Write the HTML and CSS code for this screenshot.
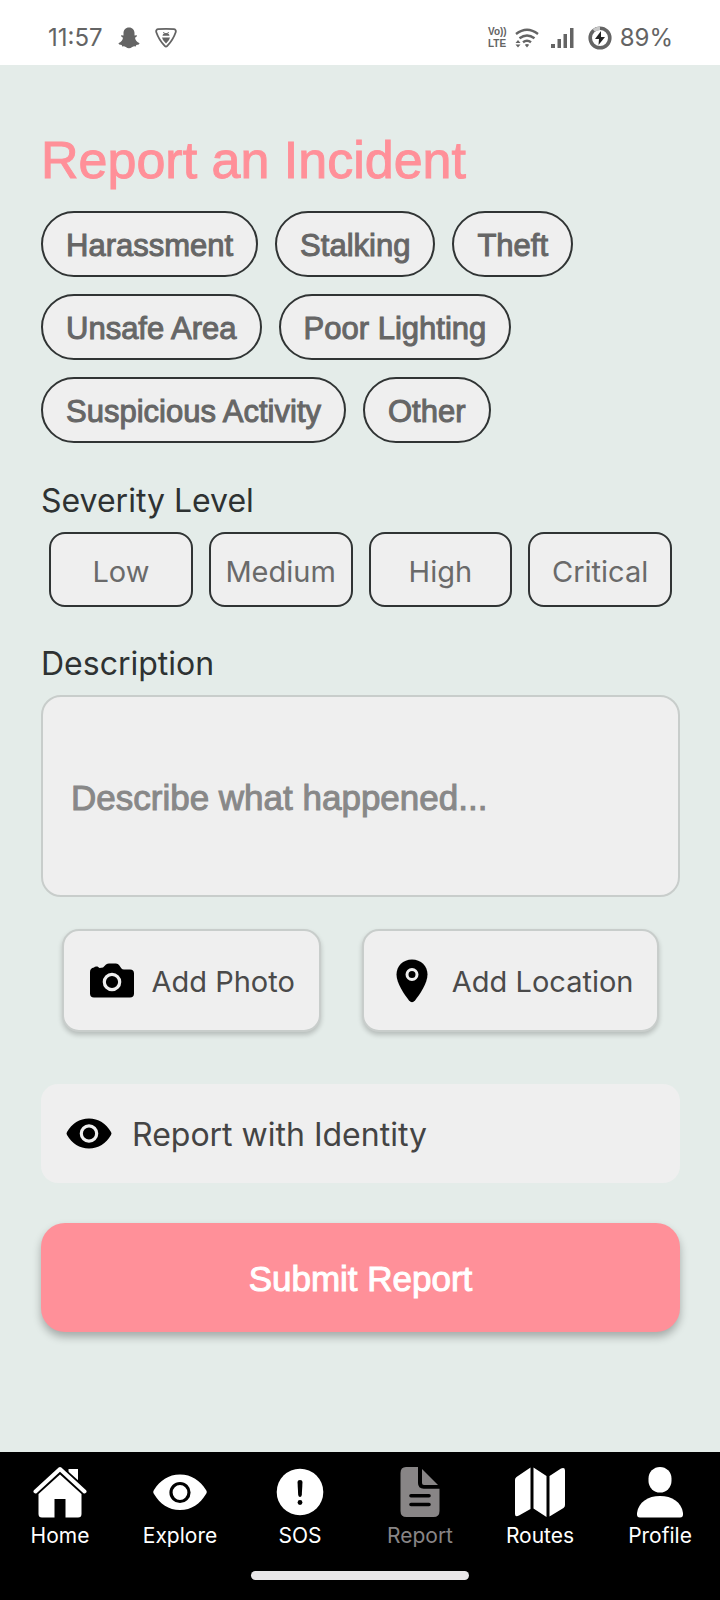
FILE: index.html
```html
<!DOCTYPE html>
<html lang="en">
<head>
<meta charset="utf-8">
<meta name="viewport" content="width=device-width, initial-scale=1">
<title>Report an Incident</title>
<link rel="stylesheet" href="styles.css">
</head>
<body>
<header class="status">
  <div class="status-group status-left">
    <span class="clock">11:57</span>
    <svg class="ghost" width="22" height="22" viewBox="0 0 22 22" fill="#646464"><path d="M11 0.500C14.500 0.500 16.500 3 16.500 6V8.500L18.800 8.300Q19.500 9.200 17 10.800Q17.500 14.500 21.600 16.200Q21.500 17.600 18.300 18L17.800 19.400Q15.500 18.900 14.200 20Q11 22.500 7.800 20Q6.500 18.900 4.200 19.400L3.700 18Q0.500 17.600 0.400 16.200Q4.500 14.500 5 10.800Q2.500 9.200 3.200 8.300L5.500 8.500V6C5.500 3 7.500 0.500 11 0.500Z"/></svg>
    <svg class="shield" width="22" height="20" viewBox="0 0 22 20" fill="none" stroke="#646464" stroke-width="1.800" stroke-linejoin="round"><path d="M3 1.200Q11 0.600 19 1.200Q21.500 1.800 20.600 4.500Q18 12 12.300 17.900Q11 19.200 9.700 17.900Q4 12 1.400 4.500Q0.500 1.800 3 1.200Z"/><path d="M7.500 7.800Q8 5 11 5Q14 5 14.500 7.800ZM7 9.500H15L14 12L11 15.500L8 12Z" fill="#646464" stroke="none"/><path d="M8.500 4L9.400 5.600M13.500 4L12.600 5.600" stroke-width="1"/></svg>
  </div>
  <div class="status-group status-right">
    <span class="volte"><span>Vo))</span><span>LTE</span></span>
    <svg class="wifi" width="24" height="20" viewBox="0 0 24 20" fill="none" stroke="#646464" stroke-width="2.400"><path d="M1 6Q12 -2.500 23 6M4.500 10.300Q12 4.500 19.500 10.300M8 14.300Q12 11.200 16 14.300"/><path d="M12 19.500L9.800 16.800Q12 15.200 14.200 16.800ZM0.500 15L3 12L5.500 15ZM0.500 16.500L3 19.500L5.500 16.500Z" fill="#646464" stroke="none"/></svg>
    <svg class="signal" width="23" height="20" viewBox="0 0 23 20" fill="#646464"><path d="M0 16h4v4H0zM6.500 11h3.500v9H6.500zM12.500 6h3.500v14h-3.500zM19 0h3.500v20H19z"/></svg>
    <svg class="charge" width="24" height="24" viewBox="0 0 24 24"><circle cx="12" cy="12" r="9.800" fill="none" stroke="#646464" stroke-width="3.600"/><path d="M5.800 4.400A9.800 9.800 0 0 1 12 2.200" fill="none" stroke="#c8c8c8" stroke-width="3.600"/><path d="M13 5L7 13H11L10.500 19L17 11H13Z" fill="#222"/></svg>
    <span class="clock">89%</span>
  </div>
</header>

<main class="page">
  <h1 class="title">Report an Incident</h1>
  <div class="chips">
    <button class="chip" type="button">Harassment</button>
    <button class="chip" type="button">Stalking</button>
    <button class="chip" type="button">Theft</button>
    <button class="chip" type="button">Unsafe Area</button>
    <button class="chip" type="button">Poor Lighting</button>
    <button class="chip" type="button">Suspicious Activity</button>
    <button class="chip" type="button">Other</button>
  </div>

  <h2 class="label">Severity Level</h2>
  <div class="levels">
    <button class="level" type="button">Low</button>
    <button class="level" type="button">Medium</button>
    <button class="level" type="button">High</button>
    <button class="level" type="button">Critical</button>
  </div>

  <label class="label" for="description">Description</label>
  <textarea class="description" id="description" placeholder="Describe what happened..."></textarea>

  <div class="attach">
    <button class="add" type="button">
      <svg width="44" height="44" viewBox="0 0 44 44"><path d="M4 8.500Q5 7 7.500 7.500L9.500 9L13 8.500L16 5.500Q17.500 4.500 19 4.500H26Q28 4.500 29 6L31.500 9.500Q32.200 10.500 34 10.500H40Q44 10.500 44 14.500V34.500Q44 38.500 40 38.500H4Q0 38.500 0 34.500V13Q0 9 4 8.500Z"/><circle cx="22" cy="23" r="7.700" fill="none" stroke="#efefef" stroke-width="3.200"/></svg>
      <span>Add Photo</span>
    </button>
    <button class="add" type="button">
      <svg width="44" height="44" viewBox="0 0 44 44"><path d="M22 0.500C31 0.500 37.500 7 37.500 15.500C37.500 24 30 35 25 41.500Q22 45 19 41.500C14 35 6.500 24 6.500 15.500C6.500 7 13 0.500 22 0.500Z"/><circle cx="22" cy="15.500" r="5" fill="none" stroke="#efefef" stroke-width="3"/></svg>
      <span>Add Location</span>
    </button>
  </div>

  <button class="identity" type="button">
    <svg width="46" height="32" viewBox="0 0 46 32"><path d="M1 14C6 5.500 13.500 0.500 23 0.500S40 5.500 45 14Q46 15.500 45 17C40 25.500 32.500 30.500 23 30.500S6 25.500 1 17Q0 15.500 1 14Z"/><circle cx="23" cy="15.500" r="7.700" fill="none" stroke="#efefef" stroke-width="3.200"/></svg>
    <span>Report with Identity</span>
  </button>

  <button class="submit" type="submit">Submit Report</button>
</main>

<footer class="bottom">
  <nav class="tabs">
    <a class="tab" href="#home">
      <svg width="54" height="52" viewBox="0 0 54 52" fill="#fff"><path d="M35.500 3H45V22L35.500 12Z"/><path d="M2.500 25.500L27 3.500L51.500 25.500" fill="none" stroke="#000" stroke-width="8"/><path d="M2.500 25.500L27 3L51.500 25.500" fill="none" stroke="#fff" stroke-width="4" stroke-linecap="round" stroke-linejoin="round"/><path d="M27 8.500L48.500 28V48Q48.500 51.500 45 51.500H32.500V33H21.500V51.500H9Q5.500 51.500 5.500 48V28Z"/></svg>
      <span>Home</span>
    </a>
    <a class="tab" href="#explore">
      <svg width="54" height="52" viewBox="0 0 54 52"><path d="M1 24C7 14.500 15.500 8.500 27 8.500S47 14.500 53 24Q54.500 26 53 28C47 38 38.500 44 27 44S7 38 1 28Q-0.500 26 1 24Z" fill="#fff"/><circle cx="27" cy="26.500" r="9" fill="none" stroke="#000" stroke-width="3.200"/></svg>
      <span>Explore</span>
    </a>
    <a class="tab" href="#sos">
      <svg width="54" height="52" viewBox="0 0 54 52"><circle cx="27" cy="26" r="23.300" fill="#fff"/><path d="M24.500 16Q24.500 14 27 14T29.500 16L28.800 29Q28.500 31 27 31T25.200 29Z"/><circle cx="27" cy="36.500" r="2.400"/></svg>
      <span>SOS</span>
    </a>
    <a class="tab tab-current" href="#report" aria-current="page">
      <svg width="54" height="52" viewBox="0 0 54 52" fill="#888586"><path d="M13 1H25V17Q25 22.700 30.700 22.700H46.500V45Q46.500 51 40.500 51H13.500Q7.500 51 7.500 45V7Q7.500 1 13 1Z"/><path d="M29 3L45 19H31Q29 19 29 17Z"/><path d="M18 29.800H36M18 38.500H36" stroke="#000" stroke-width="3.600" stroke-linecap="round"/></svg>
      <span>Report</span>
    </a>
    <a class="tab" href="#routes">
      <svg width="54" height="52" viewBox="0 0 54 52" fill="#fff"><path d="M2 14Q2 12 3.500 11L17.500 1.500V43L6 49.500Q2 51.500 2 48ZM20.500 1.500L33.500 10V51L20.500 42.500ZM36.500 10L48 2.500Q52 1 52 4.500V39Q52 41 50.500 42L36.500 50.500Z"/></svg>
      <span>Routes</span>
    </a>
    <a class="tab" href="#profile">
      <svg width="54" height="52" viewBox="0 0 54 52" fill="#fff"><rect x="15.500" y="1" width="23" height="25.500" rx="11.500"/><path d="M4 47C5.500 36 15 30 27 30S48.500 36 50 47Q50.500 51.500 47 51.500H7Q3.500 51.500 4 47Z"/></svg>
      <span>Profile</span>
    </a>
  </nav>
  <div class="gesture"></div>
</footer>
</body>
</html>
```
FILE: styles.css
```css
* {
  box-sizing: border-box;
}

body {
  margin: 0;
  min-height: 100vh;
  display: flex;
  flex-direction: column;
  background: #e4ece9;
  font-family: Inter, "Liberation Sans", sans-serif;
  color: #2e3232;
}

button,
textarea {
  font-family: inherit;
  margin: 0;
}

.title,
.chip,
.description,
.submit {
  font-family: "Liberation Sans", Arial, sans-serif;
  font-weight: 400;
  -webkit-text-stroke: 1px currentColor;
}

.status {
  display: flex;
  justify-content: space-between;
  align-items: center;
  padding: 12px 47px 1px 48px;
  height: 65px;
  background: #fff;
  color: #646464;
}

.status-group {
  display: flex;
  align-items: center;
}

.status-left {
  gap: 15px;
}

.status-right {
  gap: 8px;
}

.signal {
  margin: 0 6px 0 4px;
}

.clock {
  font-size: 24px;
  line-height: 32px;
}

.volte {
  display: flex;
  flex-direction: column;
  font-family: "Liberation Sans", Arial, sans-serif;
  font-size: 10px;
  line-height: 12px;
  font-weight: 700;
}

.page {
  flex: 1;
  display: flex;
  flex-direction: column;
  padding: 63px 40px 40px 41px;
}

.title {
  margin: 0 0 19px;
  font-size: 52px;
  line-height: 64px;
  color: #ff9099;
}

.chips {
  display: flex;
  flex-wrap: wrap;
  gap: 17px;
  margin-bottom: 36px;
}

.chip {
  height: 66px;
  padding: 3px 23px 0;
  border: 2px solid #303434;
  border-radius: 33px;
  background: #efefef;
  color: #666;
  font-size: 31px;
}

.label {
  margin: 0;
  font-size: 32px;
  line-height: 44px;
  font-weight: 400;
}

.levels {
  display: flex;
  gap: 16px;
  padding: 0 8px;
  margin: 9px 0 35px;
}

.level {
  flex: 1 1 0;
  min-width: 0;
  height: 75px;
  padding: 4px 0 0;
  border: 2px solid #303434;
  border-radius: 16px;
  background: #efefef;
  color: #6a6a6a;
  font-size: 29px;
}

.description {
  height: 202px;
  margin: 9px 0 32px;
  padding: 79px 28px 0;
  border: 2px solid #c8cdcb;
  border-radius: 20px;
  background: #efefef;
  font-size: 35px;
  line-height: 44px;
  resize: none;
}

.description::placeholder {
  color: #888;
  opacity: 1;
}

.attach {
  display: flex;
  justify-content: space-around;
  margin-bottom: 52px;
}

.add {
  display: flex;
  align-items: center;
  gap: 18px;
  height: 103px;
  padding: 0 24px 0 26px;
  border: 2px solid #c8cdcb;
  border-radius: 17px;
  background: #efefef;
  box-shadow: 0 3px 5px rgba(0, 0, 0, 0.2);
  color: #4a4a4a;
  font-size: 29px;
}

.add span,
.identity span {
  padding-top: 2px;
}

.identity {
  display: flex;
  align-items: center;
  gap: 20px;
  height: 99px;
  margin-bottom: 40px;
  padding: 0 25px;
  border: 0;
  border-radius: 17px;
  background: #efefef;
  color: #444;
  font-size: 32px;
}

.submit {
  height: 109px;
  padding: 3px 24px 0;
  border: 0;
  border-radius: 24px;
  background: #ff9099;
  box-shadow: 0 5px 9px rgba(0, 0, 0, 0.28);
  color: #fff;
  font-size: 35px;
}

.bottom {
  display: flex;
  flex-direction: column;
  align-items: center;
  padding: 14px 0 20px;
  background: #000;
}

.tabs {
  display: flex;
  width: 100%;
  margin-bottom: 21px;
}

.tab {
  flex: 1 1 0;
  display: flex;
  flex-direction: column;
  align-items: center;
  gap: 4px;
  color: #fff;
  font-size: 21px;
  line-height: 28px;
  text-decoration: none;
}

.tab-current {
  color: #888586;
}

.gesture {
  width: 218px;
  height: 9px;
  border-radius: 5px;
  background: #e9e7e8;
}
```
